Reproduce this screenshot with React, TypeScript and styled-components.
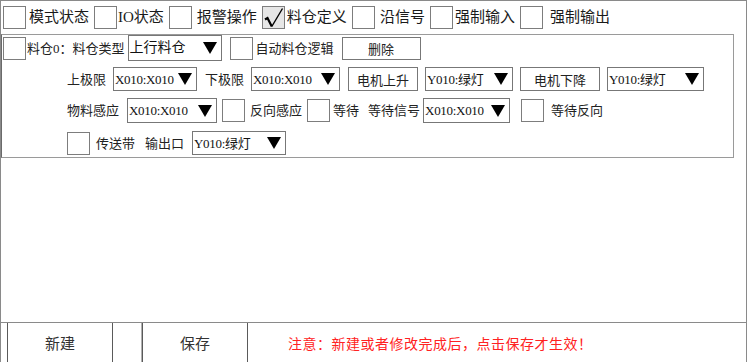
import styled, { createGlobalStyle } from "styled-components";

const GlobalStyle = createGlobalStyle`
  html, body {
    margin: 0;
    padding: 0;
    background: #fff;
  }

  body {
    font-family: "Liberation Serif", "Noto Sans CJK SC", serif;
    color: #1a1a1a;
  }
`;

const topItems = [
  { label: "模式状态", lead: 3, checked: false },
  { label: "IO状态", lead: 1, checked: false },
  { label: "报警操作", lead: 5, checked: false },
  { label: "料仓定义", lead: 2, checked: true },
  { label: "沿信号", lead: 5, checked: false },
  { label: "强制输入", lead: 2, checked: false },
  { label: "强制输出", lead: 7, checked: false },
];

const Box = ({ checked = false, ml = 0 }: { checked?: boolean; ml?: number }) => (
  <Check $checked={checked} $ml={ml}>
    {checked && (
      <svg width="21" height="21" viewBox="0 0 21 21">
        <path d="M2 12.5 L4.5 11 L8.8 19.5" fill="none" stroke="#000" strokeWidth="2.2" strokeLinejoin="miter" />
        <path d="M8.8 19.5 L19.5 1.5" fill="none" stroke="#000" strokeWidth="1.4" />
      </svg>
    )}
  </Check>
);

const Combo = ({ value, width, ml = 0, big = false }: { value: string; width: number; ml?: number; big?: boolean }) => (
  <ComboBox $w={width} $ml={ml}>
    <ComboText $big={big}>{value}</ComboText>
    <Arrow />
  </ComboBox>
);

export default function App() {
  return (
    <>
      <GlobalStyle />
      <Frame>
        <TopBar>
          {topItems.map(({ label, lead, checked }, i) => (
            <TopItem key={label} $first={i === 0}>
              <Box checked={checked} />
              <TopLabel $lead={lead}>{label}</TopLabel>
            </TopItem>
          ))}
        </TopBar>

        <Panel>
          <Row $h={26} $mt={0} $pl={1}>
            <Box />
            <Label $ml={1}>料仓0：</Label>
            <Label $ml={0}>料仓类型</Label>
            <Combo value="上行料仓" width={94} ml={3} big />
            <Box ml={8} />
            <Label $ml={3}>自动料仓逻辑</Label>
            <Button $w={79} $h={23} $ml={8}>删除</Button>
          </Row>

          <Row $h={24} $mt={6} $pl={65}>
            <Label>上极限</Label>
            <Combo value="X010:X010" width={84} ml={7} />
            <Label $ml={8}>下极限</Label>
            <Combo value="X010:X010" width={89} ml={7} />
            <Button $w={70} $h={24} $ml={8}>电机上升</Button>
            <Combo value="Y010:绿灯" width={88} ml={7} />
            <Button $w={80} $h={24} $ml={7}>电机下降</Button>
            <Combo value="Y010:绿灯" width={97} ml={7} />
          </Row>

          <Row $h={25} $mt={7} $pl={65}>
            <Label>物料感应</Label>
            <Combo value="X010:X010" width={90} ml={8} />
            <Box ml={5} />
            <Label $ml={5}>反向感应</Label>
            <Box ml={5} />
            <Label $ml={3}>等待</Label>
            <Label $ml={9}>等待信号</Label>
            <Combo value="X010:X010" width={87} ml={3} />
            <Box ml={11} />
            <Label $ml={7}>等待反向</Label>
          </Row>

          <Row $h={24} $mt={8} $pl={65}>
            <Box />
            <Label $ml={6}>传送带</Label>
            <Label $ml={10}>输出口</Label>
            <Combo value="Y010:绿灯" width={94} ml={8} />
          </Row>
        </Panel>

        <Filler />

        <BottomBar>
          <BigButton $ml={6}>新建</BigButton>
          <Gap />
          <BigButton $ml={0}>保存</BigButton>
          <Notice>注意：新建或者修改完成后，点击保存才生效！</Notice>
        </BottomBar>
      </Frame>
    </>
  );
}

const Frame = styled.div`
  width: 747px;
  height: 362px;
  box-sizing: border-box;
  border: 1px solid #8a8a8a;
  border-bottom: none;
  display: flex;
  flex-direction: column;
  overflow: hidden;
`;

const TopBar = styled.div`
  height: 33px;
  flex: none;
  display: flex;
  align-items: center;
  padding-left: 2px;
`;

const TopItem = styled.div<{ $first: boolean }>`
  display: flex;
  align-items: center;
  margin-left: ${(p) => (p.$first ? 0 : 5)}px;
`;

const TopLabel = styled.span<{ $lead: number }>`
  margin-left: ${(p) => p.$lead}px;
  font-size: 15px;
  line-height: 1;
  white-space: nowrap;
`;

const Check = styled.div<{ $checked: boolean; $ml: number }>`
  width: 23px;
  height: 23px;
  flex: none;
  box-sizing: border-box;
  margin-left: ${(p) => p.$ml}px;
  border: 1px solid #7d7d7d;
  background: ${(p) => (p.$checked ? "#e6e6e6" : "#fff")};
  display: flex;
  align-items: center;
  justify-content: center;
`;

const Panel = styled.div`
  width: 733px;
  height: 124px;
  flex: none;
  box-sizing: border-box;
  border: 1px solid #9a9a9a;
  border-left-color: #6a6a6a;
  display: flex;
  flex-direction: column;
`;

const Row = styled.div<{ $h: number; $mt: number; $pl: number }>`
  height: ${(p) => p.$h}px;
  margin-top: ${(p) => p.$mt}px;
  padding-left: ${(p) => p.$pl}px;
  display: flex;
  align-items: center;
`;

const Label = styled.span<{ $ml?: number }>`
  margin-left: ${(p) => p.$ml ?? 0}px;
  font-size: 13px;
  line-height: 1;
  white-space: nowrap;
  color: #222;
`;

const ComboBox = styled.div<{ $w: number; $ml: number }>`
  width: ${(p) => p.$w}px;
  height: 100%;
  flex: none;
  box-sizing: border-box;
  margin-left: ${(p) => p.$ml}px;
  padding: 0 4px 0 1px;
  border: 1px solid #777;
  background: #fff;
  display: flex;
  align-items: center;
  justify-content: space-between;
`;

const ComboText = styled.span<{ $big: boolean }>`
  font-size: ${(p) => (p.$big ? 14 : 13)}px;
  letter-spacing: ${(p) => (p.$big ? 0 : -0.3)}px;
  line-height: 1;
  white-space: nowrap;
  color: #111;
`;

const Arrow = styled.span`
  width: 0;
  height: 0;
  flex: none;
  border-left: 7px solid transparent;
  border-right: 7px solid transparent;
  border-top: 12px solid #000;
`;

const Button = styled.div<{ $w: number; $h: number; $ml: number }>`
  width: ${(p) => p.$w}px;
  height: ${(p) => p.$h}px;
  flex: none;
  box-sizing: border-box;
  margin-left: ${(p) => p.$ml}px;
  border: 1px solid #777;
  background: #fff;
  display: flex;
  align-items: center;
  justify-content: center;
  font-size: 13px;
  color: #222;
`;

const Filler = styled.div`
  flex: 1;
`;

const BottomBar = styled.div`
  height: 39px;
  flex: none;
  border-top: 1px solid #8a8a8a;
  display: flex;
  align-items: stretch;
`;

const BigButton = styled.div<{ $ml: number }>`
  width: 106px;
  flex: none;
  box-sizing: border-box;
  margin-left: ${(p) => p.$ml}px;
  border-left: 1px solid #5a5a5a;
  border-right: 1px solid #5a5a5a;
  display: flex;
  align-items: center;
  justify-content: center;
  font-size: 15px;
  color: #333;
`;

const Gap = styled.div`
  width: 29px;
  flex: none;
  box-sizing: border-box;
  border-right: 1px solid #b0b0b0;
`;

const Notice = styled.div`
  margin-left: 40px;
  display: flex;
  align-items: center;
  font-size: 14px;
  letter-spacing: 0.5px;
  color: #f22;
  white-space: nowrap;
`;
